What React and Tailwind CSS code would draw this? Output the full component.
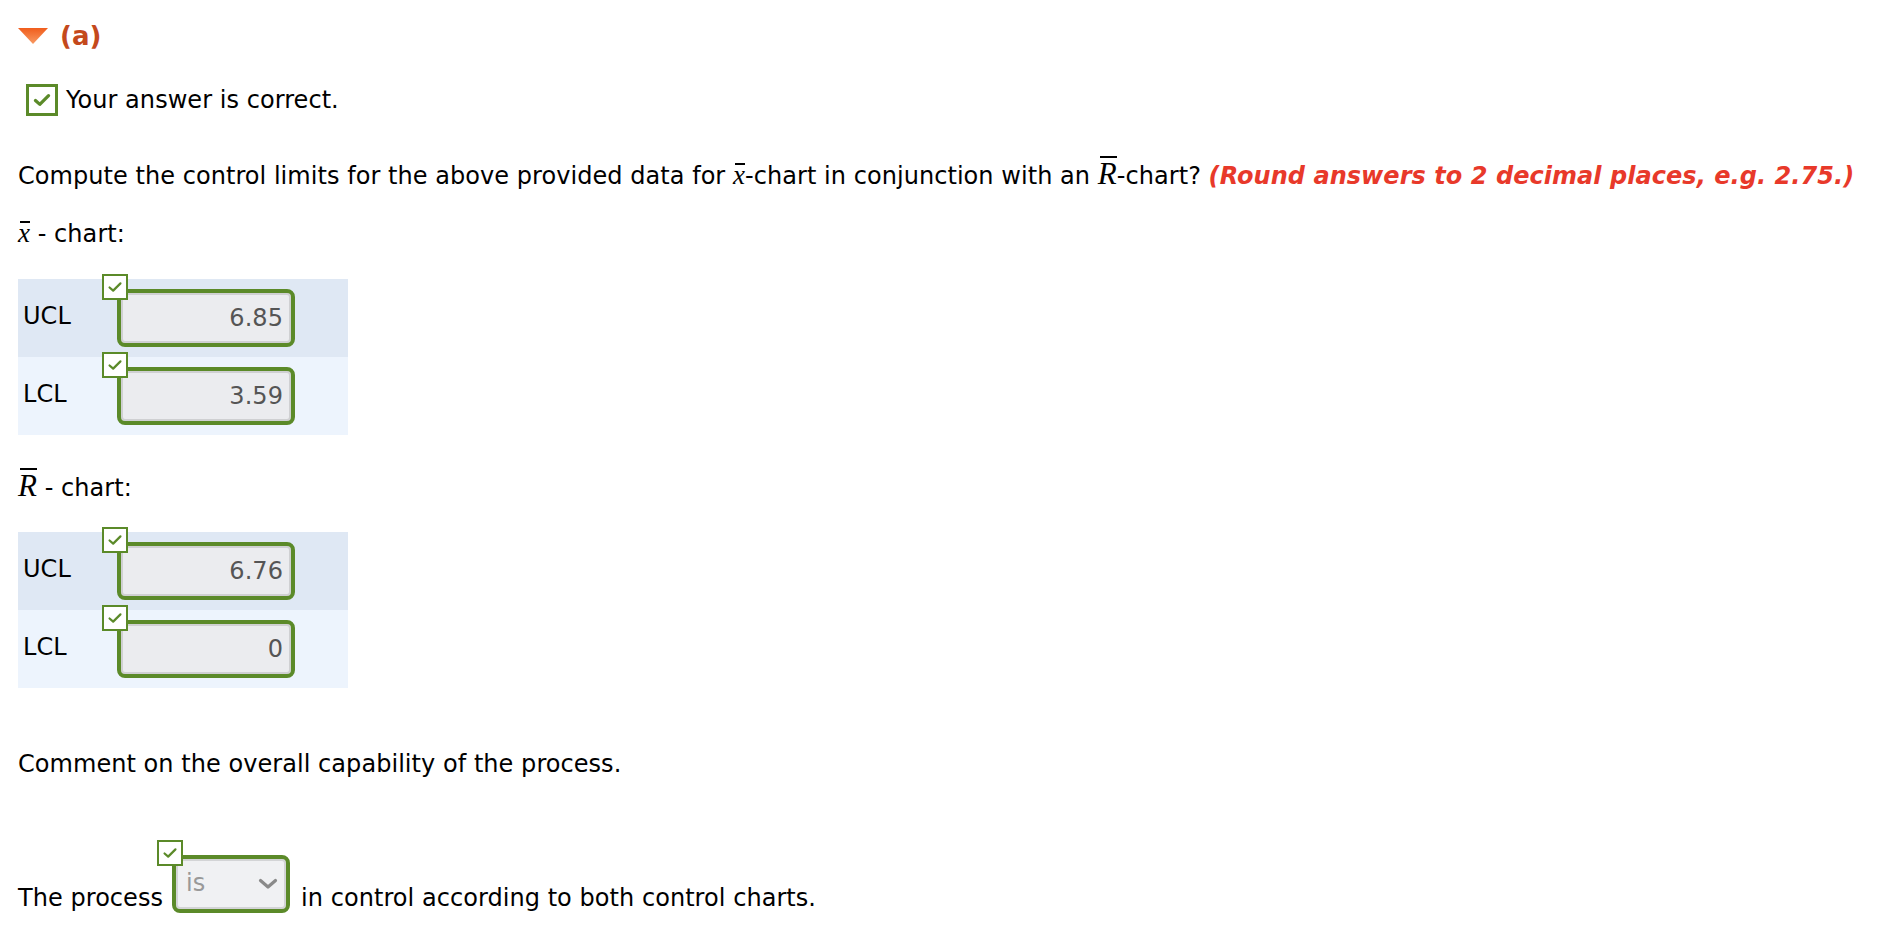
import React from "react";

function Tick({ size = 22, width = 2.5 }) {
  return (
    <svg width={size} height={size} viewBox="0 0 22 22" fill="none">
      <polyline points="5,11.5 9,15 17,7" stroke="#5b8a29" strokeWidth={width} strokeLinecap="round" strokeLinejoin="round" />
    </svg>
  );
}

function SmallCheck() {
  return (
    <div className="absolute -left-[15px] -top-[15px] w-[26px] h-[26px] border-2 border-[#5b8a29] bg-white flex items-center justify-center">
      <Tick size={20} width={2.4} />
    </div>
  );
}

function Bar({ children, big }) {
  return (
    <span className={`relative inline-block font-['Liberation_Serif',serif] italic ${big ? "text-[31px] leading-[29px]" : "text-[27px] leading-[29px]"}`}>
      <span className={`absolute left-[2px] right-0 bg-black ${big ? "-top-[3px] h-[2px]" : "top-[2px] h-[2px]"}`} />
      {children}
    </span>
  );
}

function AnswerInput({ value }) {
  return (
    <div className="relative">
      <SmallCheck />
      <div className="w-[178px] h-[58px] border-4 border-[#5b8a29] rounded-[8px] bg-[#ebecef] shadow-[inset_0_0_0_2px_#cfd0d2] flex items-center justify-end pr-[8px] text-[24px] text-[#555]">
        {value}
      </div>
    </div>
  );
}

function LimitTable({ rows }) {
  return (
    <div className="w-[330px]">
      {rows.map((r, i) => (
        <div key={r.label} className={`h-[78px] flex items-center ${i === 0 ? "bg-[#dfe8f4]" : "bg-[#edf4fd]"}`}>
          <div className="w-[99px] pl-[5px] -mt-[4px]">{r.label}</div>
          <AnswerInput value={r.value} />
        </div>
      ))}
    </div>
  );
}

export default function App() {
  return (
    <div className="min-h-screen bg-white text-black font-['DejaVu_Sans',Verdana,sans-serif] text-[24px] leading-[29px] tracking-[0.05px] pl-[18px]">
      {/* part header */}
      <div className="pt-[21px] h-[51px] flex items-center gap-[12px]">
        <svg width="30" height="16" viewBox="0 0 30 16">
          <defs>
            <linearGradient id="tri" x1="0" y1="0" x2="0" y2="1">
              <stop offset="0" stopColor="#f05d1c" />
              <stop offset="1" stopColor="#f89a63" />
            </linearGradient>
          </defs>
          <polygon points="0,0 30,0 15,16" fill="url(#tri)" />
        </svg>
        <span className="font-bold text-[26px] text-[#c4491c]">(a)</span>
      </div>

      {/* feedback */}
      <div className="mt-[33px] flex items-center ml-[8px] gap-[8px]">
        <div className="w-8 h-8 border-[3px] border-[#5b8a29] bg-white flex items-center justify-center">
          <Tick size={24} width={3} />
        </div>
        <span>Your answer is correct.</span>
      </div>

      <p className="mt-[43px] h-[29px] whitespace-nowrap">
        Compute the control limits for the above provided data for <Bar>x</Bar>-chart in conjunction with an <Bar big>R</Bar>-chart?{" "}
        <span className="font-bold italic text-[#e8392a]">(Round answers to 2 decimal places, e.g. 2.75.)</span>
      </p>

      <p className="mt-[31px] h-[29px]">
        <Bar>x</Bar> - chart:
      </p>

      <div className="mt-[31px]">
        <LimitTable rows={[{ label: "UCL", value: "6.85" }, { label: "LCL", value: "3.59" }]} />
      </div>

      <p className="mt-[36px] h-[29px]">
        <Bar big>R</Bar> - chart:
      </p>

      <div className="mt-[32px]">
        <LimitTable rows={[{ label: "UCL", value: "6.76" }, { label: "LCL", value: "0" }]} />
      </div>

      <p className="mt-[62px] h-[29px]">Comment on the overall capability of the process.</p>

      <div className="mt-[76px] flex items-end h-[58px] whitespace-nowrap">
        <span>The process</span>
        <div className="relative ml-[9px] mr-[11px]">
          <SmallCheck />
          <div className="w-[118px] h-[58px] border-4 border-[#5b8a29] rounded-[8px] bg-[#f0f1f3] shadow-[inset_0_0_0_2px_#d3d4d6] flex items-center justify-between pl-[10px] pr-[8px]">
            <span className="text-[#999] -mt-[2px]">is</span>
            <svg width="20" height="12" viewBox="0 0 20 12" fill="none">
              <polyline points="2.5,2.5 10,9 17.5,2.5" stroke="#8a8a8a" strokeWidth="3.2" strokeLinecap="round" strokeLinejoin="round" />
            </svg>
          </div>
        </div>
        <span>in control according to both control charts.</span>
      </div>
    </div>
  );
}
